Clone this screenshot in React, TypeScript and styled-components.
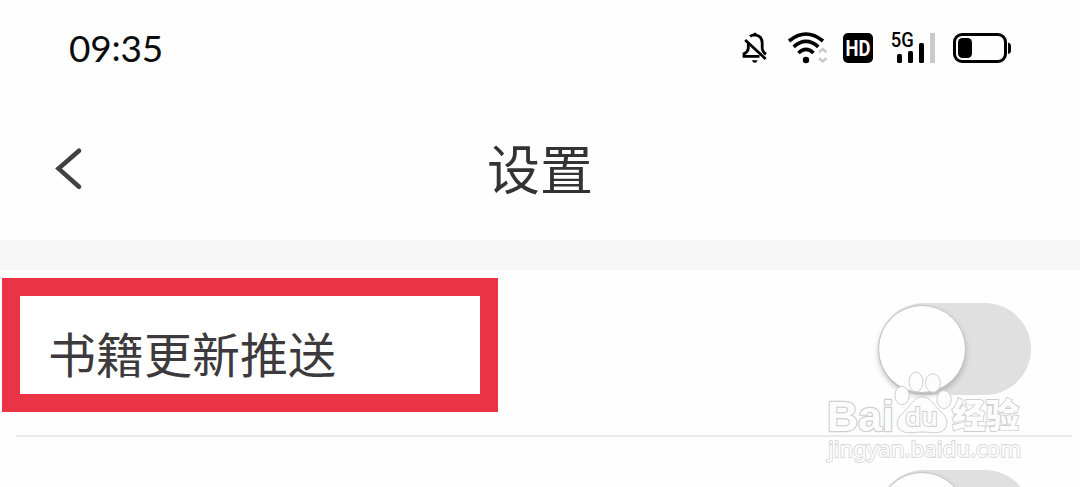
import React from 'react';
import styled, { createGlobalStyle } from 'styled-components';

const GlobalStyle = createGlobalStyle`
  * { box-sizing: border-box; }
  body {
    margin: 0;
    background: #fefefe;
    overflow: hidden;
    font-family: "Noto Sans CJK SC", sans-serif;
  }
`;

const Screen = styled.main`
  position: relative;
  width: 1080px;
  height: 487px;
  overflow: hidden;
  display: flex;
  flex-direction: column;
`;

const StatusBar = styled.header`
  flex: none;
  height: 96px;
  padding: 0 68px 0 69px;
  display: flex;
  align-items: center;
  justify-content: space-between;
`;

const Clock = styled.time`
  font: 400 37px/44px Lato, sans-serif;
  color: #0c0c0c;
  letter-spacing: -0.2px;
`;

const Colon = styled.span`
  position: relative;
  top: -1px;
`;

const StatusIcons = styled.div`
  display: flex;
  align-items: center;
  height: 40px;

  svg { display: block; overflow: visible; }
`;

const NavBar = styled.nav`
  flex: none;
  height: 144px;
  padding: 0 54px;
  display: grid;
  grid-template-columns: 30px 1fr 30px;
  align-items: center;
`;

const BackButton = styled.button`
  padding: 0;
  border: 0;
  background: none;
  height: 46px;

  svg { display: block; }
`;

const Title = styled.h1`
  margin: 0 0 2px;
  text-align: center;
  font-size: 53px;
  line-height: 78px;
  font-weight: 400;
  color: #333;
`;

const Band = styled.div`
  flex: none;
  height: 30px;
  background: #f6f6f6;
`;

const Row = styled.section`
  flex: none;
  height: 167px;
  display: flex;
  justify-content: space-between;
  align-items: flex-start;
  padding: 8px 49px 0 2px;
  background: linear-gradient(#e8ebeb, #e8ebeb) 16px 165px / 1056px 2px no-repeat;
`;

const Highlight = styled.div`
  width: 496px;
  height: 134px;
  border: 18px solid #ea3345;
  background: #fff;
  display: flex;
  align-items: center;
  padding: 13px 0 0 28px;
`;

const Label = styled.span`
  font-size: 48px;
  line-height: 72px;
  color: #3c3a3c;
  white-space: nowrap;
`;

const Switch = styled.div`
  width: 153px;
  height: 92px;
  margin: 25px 0 0 auto;
  border-radius: 46px;
  background: #e0e0e0;
  display: flex;
  align-items: center;
`;

const Knob = styled.div`
  width: 88px;
  height: 88px;
  border-radius: 50%;
  background: #fefefe;
  border: 1.5px solid #c6c4c5;
  box-shadow: 0 3px 5px rgba(90, 80, 85, 0.32);
`;

const Watermark = styled.svg`
  position: absolute;
  left: 820px;
  top: 365px;
  pointer-events: none;

  text { paint-order: stroke; }
`;

const Bell = () => (
  <svg width="30" height="40" viewBox="0 0 30 40" fill="none" stroke="#000" strokeWidth="2.8">
    <path d="M10 8.5Q12 6.8 15 6.8Q22 7.5 22.2 15V20.5Q22.5 24 26 26.2" />
    <path d="M8.3 14V20.5Q7.8 24 4 25.7V28.3H19.5" />
    <path d="M5.2 12L25.7 31" />
    <path d="M15 4.8V7.5" />
    <path d="M12 32.2h5.5Q17 34.8 14.7 34.8Q12.5 34.8 12 32.2Z" fill="#000" stroke="none" />
  </svg>
);

const Wifi = () => (
  <svg width="44" height="40" viewBox="0 0 44 40" fill="none" stroke="#000" strokeWidth="3.6">
    <path d="M3 13Q20 -1 37 13" />
    <path d="M7.7 18.8Q20 8 32.3 18.8" />
    <path d="M12.5 25Q20 17.8 27.5 25" />
    <circle cx="20" cy="32" r="3.2" fill="#000" stroke="none" />
    <path d="M33 24.3l3.7-3.2l3.7 3.2M33 30.2l3.7 3.2l3.7-3.2" stroke="#c8c8c8" strokeWidth="2.6" />
  </svg>
);

const HdBadge = () => (
  <svg width="30" height="40" viewBox="0 0 30 40">
    <rect y="5" width="30" height="30" rx="5" fill="#000" />
    <text x="15" y="28" textAnchor="middle" textLength="25" lengthAdjust="spacingAndGlyphs"
      fontFamily="Roboto, sans-serif" fontSize="22" fontWeight="700" fill="#fff">HD</text>
  </svg>
);

const Signal = () => (
  <svg width="46" height="40" viewBox="0 0 46 40">
    <text x="-0.2" y="19.2" textLength="23" lengthAdjust="spacingAndGlyphs"
      fontFamily="Roboto, sans-serif" fontSize="19.5" fontWeight="500" fill="#000">5G</text>
    <rect x="6" y="26" width="5" height="9" rx="1.5" />
    <rect x="17" y="23" width="5" height="12" rx="1.5" />
    <rect x="28" y="15" width="5" height="20" rx="1.5" />
    <rect x="39" y="5" width="5" height="30" fill="#cacaca" />
  </svg>
);

const Battery = () => (
  <svg width="59" height="40" viewBox="0 0 59 40">
    <rect x="1.5" y="6.5" width="51" height="27" rx="7.5" fill="none" stroke="#000" strokeWidth="3" />
    <rect x="5" y="10" width="14" height="20" rx="4.5" />
    <path d="M55 14.5Q58 15 58 18V22.5Q58 25.5 55 26Z" />
  </svg>
);

const Gap = styled.span<{ $w: number }>`
  width: ${({ $w }) => $w}px;
`;

const Toggle = () => (
  <Switch role="switch" aria-checked="false">
    <Knob />
  </Switch>
);

const App = () => (
  <>
    <GlobalStyle />
    <Screen>
      <StatusBar>
        <Clock>09<Colon>:</Colon>35</Clock>
        <StatusIcons>
          <Bell />
          <Gap $w={16} />
          <Wifi />
          <Gap $w={13} />
          <HdBadge />
          <Gap $w={18} />
          <Signal />
          <Gap $w={16} />
          <Battery />
        </StatusIcons>
      </StatusBar>
      <NavBar>
        <BackButton aria-label="返回">
          <svg width="30" height="46" viewBox="0 0 30 46" fill="none" stroke="#414141" strokeWidth="4.6" strokeLinecap="round">
            <path d="M25 5.7L4.6 23.6L25 41.7" />
          </svg>
        </BackButton>
        <Title>设置</Title>
      </NavBar>
      <Band />
      <Row>
        <Highlight>
          <Label>书籍更新推送</Label>
        </Highlight>
        <Toggle />
      </Row>
      <Row>
        <Toggle />
      </Row>
      <Watermark width="210" height="105" viewBox="0 0 210 105" fill="#fdfdfd" stroke="#cfcfcf" strokeWidth="1">
        <text x="7" y="66" fontSize="43" fontFamily="Liberation Sans, sans-serif" fontWeight="700"
          textLength="67" lengthAdjust="spacingAndGlyphs" strokeWidth="2.4">Bai</text>
        <ellipse cx="82" cy="30.5" rx="7.2" ry="9.2" />
        <ellipse cx="96" cy="17" rx="7" ry="9.8" />
        <ellipse cx="113" cy="18" rx="7.4" ry="9.2" />
        <ellipse cx="124" cy="34.5" rx="7.2" ry="9" />
        <path d="M102 32C110 32 113 39 119 45C127 51 129 58 125 64C119 70 111 67 102 67C93 67 86 70 79 64C75 58 78 51 85 46C91 40 94 32 102 32Z" />
        <text x="85" y="61" fontSize="26" fontFamily="Open Sans, sans-serif" fontWeight="600"
          textLength="33" lengthAdjust="spacingAndGlyphs" strokeWidth="2">du</text>
        <text x="132" y="63" fontSize="34" fontFamily="Noto Sans CJK SC, sans-serif" fontWeight="900"
          textLength="67" lengthAdjust="spacingAndGlyphs" strokeWidth="1.8">经验</text>
        <text x="8" y="92" fontSize="22" fontFamily="Noto Sans, sans-serif" fontWeight="400"
          textLength="193" lengthAdjust="spacingAndGlyphs" strokeWidth="1.8" stroke="#d8d8d8">jingyan.baidu.com</text>
      </Watermark>
    </Screen>
  </>
);

export default App;
